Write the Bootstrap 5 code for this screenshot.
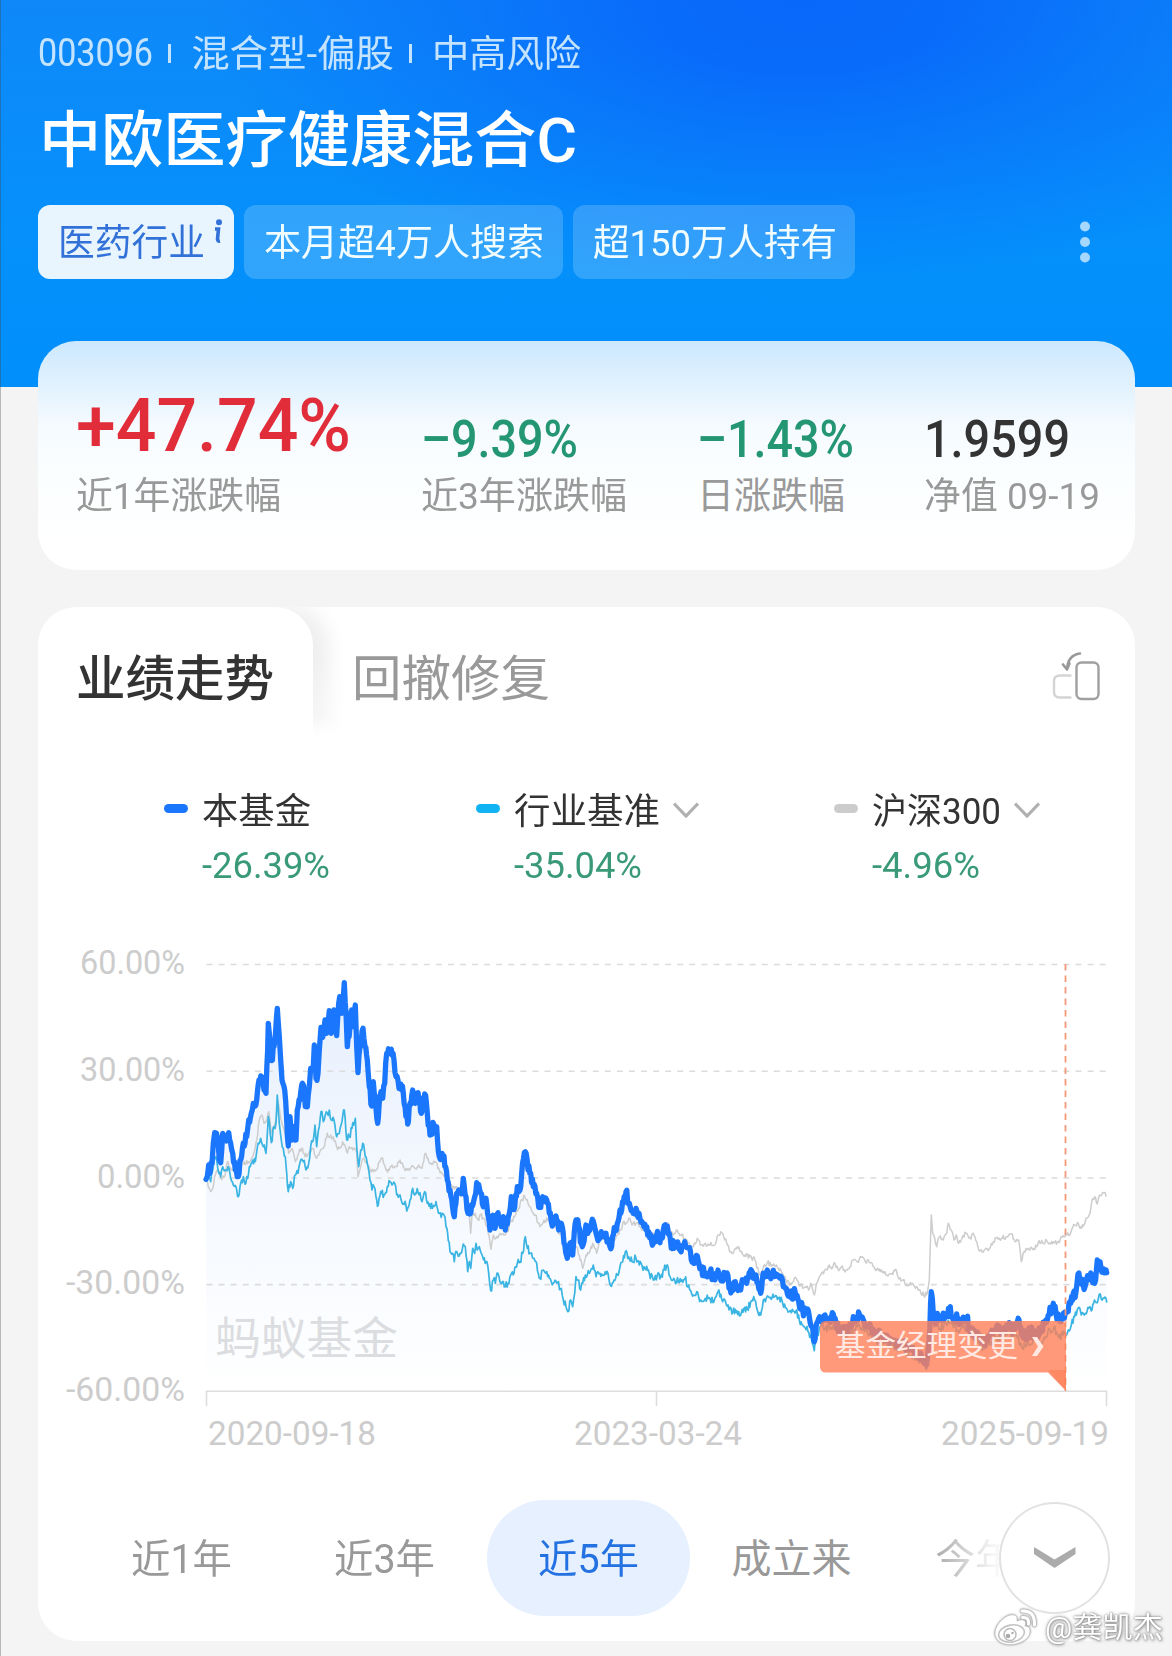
<!DOCTYPE html>
<html lang="zh-CN">
<head>
<meta charset="utf-8">
<meta name="viewport" content="width=device-width, initial-scale=1">
<title>中欧医疗健康混合C</title>
<link href="https://cdn.jsdelivr.net/npm/bootstrap@5.3.0/dist/css/bootstrap.min.css" rel="stylesheet">
<style>
  body { background:#f4f4f4; font-family:Roboto,"Noto Sans CJK SC",sans-serif; color:#333; width:1172px; height:1656px; overflow:hidden; }
  body::before { content:""; position:absolute; left:0; top:0; width:1px; height:1656px; background:rgba(70,70,70,.35); z-index:5; }
  [data-w] { display:inline-block; white-space:nowrap; transform-origin:0 50%; }
  .hero { height:387px; padding:27px 38px 0; color:#fff;
    background:radial-gradient(ellipse 600px 285px at 800px 0, #0868fa 0%, rgba(8,104,250,.92) 22%, rgba(8,108,250,.55) 55%, rgba(3,142,251,0) 100%),
      linear-gradient(180deg,#0f88f9 0%,#0590fb 60%,#018ffb 100%); }
  .meta-line { height:52px; font-size:37px; line-height:52px; color:#c3e3fe; }
  .meta-line .digits { font-size:38px; }
  .meta-line .kind { padding-top:4px; }
  .sep { width:3px; height:19px; background:#c3e3fe; }
  .fund-name { font-size:61px; line-height:80px; font-weight:500; margin:22px 0 0 1px; height:80px; }
  .tag-row { margin-top:24px; gap:10px; }
  .tag { height:74px; border-radius:12px; background:rgba(255,255,255,.18); font-size:37px; line-height:77px; padding-left:20px; color:#f1fcff; }
  .tag-1 { width:196px; background:#e8f4fe; color:#3272d8; }
  .tag-2 { width:319px; } .tag-3 { width:282px; }
  .tag-1 svg { margin:14px 0 0 8px; }
  .more { margin-right:44px; }
  .panel { width:1097px; margin-left:38px; border-radius:38px; }
  .stats { height:229px; margin-top:-46px; position:relative; padding-left:38px; background:linear-gradient(180deg,#cce8fe 0,#e4f3fe 22%,#f6fbff 38%,#fbfeff 60%,#fff 90%); }
  .stat-val { height:88px; margin-top:42px; display:flex; align-items:flex-end; font-weight:500; font-size:51px; line-height:63px; color:#249672; }
  .stat-big { font-size:75px; line-height:91px; font-weight:500; color:#e12c3a; }
  .stat-nav { color:#333; }
  .stat-lab { font-size:37px; line-height:44px; color:#999; margin-top:4px; }
  .trend { height:1034px; margin-top:37px; background:#fff; overflow:hidden; }
  .tabs-line { height:130px; }
  .tab-on { width:275px; height:130px; padding:43px 0 0 38px; font-size:49px; font-weight:500; line-height:60px; position:relative; background:#fff; border-radius:38px 38px 0 0; box-shadow:14px 0 20px 2px rgba(0,0,0,.065); clip-path:inset(0 -50px 0 0); }
  .tab-on::after { content:""; position:absolute; left:100%; width:50px; top:50px; bottom:0; background:linear-gradient(rgba(255,255,255,0),rgba(255,255,255,.4) 60px,#fff); }
  .tab-off { padding:43px 0 0 39px; font-size:49px; line-height:60px; color:#999; position:relative; }
  .rotate { margin:44px 33px 0 auto; }
  .legend-line { padding-top:53px; height:148px; }
  .key { display:grid; grid-template-columns:38px auto; align-content:start; }
  .key-pill { width:24px; height:9px; border-radius:5px; margin-top:14px; }
  .key-name { font-size:36px; line-height:44px; height:44px; }
  .key-val { grid-column:2; font-size:36px; line-height:40px; margin-top:12px; color:#3a9a78; }
  .key-name svg { margin-left:13px; vertical-align:6px; }
  .plot { display:block; margin-top:55px; }
  .ranges { height:116px; margin-top:40px; padding-left:42px; position:relative; }
  .range { flex:0 0 203.3px; text-align:center; font-size:40px; line-height:120px; height:116px; color:#999; }
  .range.on { background:#e6f0ff; border-radius:58px; color:#2472e2; }
  .range.last { flex-basis:180px; text-align:left; padding-left:42px; overflow:hidden; white-space:nowrap; background:linear-gradient(90deg,#aaa 42px,#ddd 80px,#f5f5f5 100px,#fff 118px); -webkit-background-clip:text; color:transparent; }
  .expand { position:absolute; left:961px; top:2px; width:111px; height:112px; border:2.5px solid #e2e2e2; border-radius:50%; background:#fff; }
  .signature { position:absolute; left:993px; top:1606px; z-index:6; color:#fff; font-size:29px; line-height:45px; text-shadow:0 0 2px #777,1px 1px 3px #999,0 0 4px #bbb; }
  .signature svg { filter:drop-shadow(0 0 1px #999); }
</style>
<script src="https://cdn.jsdelivr.net/npm/bootstrap@5.3.0/dist/js/bootstrap.bundle.min.js"></script>
</head>
<body>
<header class="hero">
  <div class="meta-line d-flex align-items-center">
    <span class="digits" data-w="115">003096</span>
    <i class="sep" style="margin-left:15px"></i>
    <span class="kind ms-3 ps-1" data-w="207">混合型-偏股</span>
    <i class="sep" style="margin-left:15px"></i>
    <span class="kind" style="margin-left:20px" data-w="149">中高风险</span>
  </div>
  <h1 class="fund-name"><span data-w="538">中欧医疗健康混合C</span></h1>
  <div class="tag-row d-flex align-items-center">
    <div class="tag tag-1 d-flex"><span data-w="147">医药行业</span>
      <svg width="10" height="26" viewBox="0 0 10 26"><circle cx="6" cy="3.200" r="3" fill="#3272d8"/><path d="M2 10H5.500L4.500 20Q4.500 22.500 7 22" fill="none" stroke="#3272d8" stroke-width="3.600"/></svg>
    </div>
    <div class="tag tag-2"><span data-w="280">本月超4万人搜索</span></div>
    <div class="tag tag-3"><span data-w="244">超150万人持有</span></div>
    <svg class="more ms-auto" width="10" height="42" viewBox="0 0 10 42" fill="#a5d7ff"><circle cx="5" cy="5.5" r="5"/><circle cx="5" cy="21" r="5"/><circle cx="5" cy="36.5" r="5"/></svg>
  </div>
</header>

<section class="panel stats d-flex">
  <div style="width:345px"><div class="stat-val stat-big"><span data-w="275">+47.74%</span></div><div class="stat-lab"><span data-w="205">近1年涨跌幅</span></div></div>
  <div style="width:276px"><div class="stat-val"><span data-w="157">–9.39%</span></div><div class="stat-lab"><span data-w="206">近3年涨跌幅</span></div></div>
  <div style="width:227px"><div class="stat-val"><span data-w="157">–1.43%</span></div><div class="stat-lab"><span data-w="148">日涨跌幅</span></div></div>
  <div><div class="stat-val stat-nav"><span data-w="146">1.9599</span></div><div class="stat-lab"><span data-w="176">净值 09-19</span></div></div>
</section>

<section class="panel trend">
  <div class="tabs-line d-flex">
    <div class="tab-on"><span data-w="198">业绩走势</span></div>
    <div class="tab-off"><span data-w="198">回撤修复</span></div>
    <svg class="rotate" width="50" height="52" viewBox="1052 651 50 52" fill="none" stroke-linecap="round" stroke-linejoin="round">
      <rect x="1076.5" y="662.5" width="22" height="36.5" rx="5" stroke="#a0a0a0" stroke-width="2.4"/>
      <path d="M1070.5 675.5H1060Q1054 675.5 1054 681V692Q1054 697.5 1060 697.5H1070.5" stroke="#d4d4d4" stroke-width="2.4"/>
      <path d="M1080 653.5Q1068 655 1067 669M1063 664.5L1067 669.5L1069.500 663.5" stroke="#999" stroke-width="2.6"/>
    </svg>
  </div>

  <div class="legend-line d-flex">
    <div class="key" style="margin-left:126px;width:312px"><i class="key-pill" style="background:#1a76fc"></i><div class="key-name"><span data-w="109">本基金</span></div><div class="key-val"><span data-w="128">-26.39%</span></div></div>
    <div class="key" style="width:358px"><i class="key-pill" style="background:#12b3f2"></i><div class="key-name"><span data-w="146">行业基准</span><svg width="26" height="16" viewBox="0 0 26 16"><path d="M1 1.5L13 14L25 1.5" fill="none" stroke="#b0b0b0" stroke-width="3.2"/></svg></div><div class="key-val"><span data-w="128">-35.04%</span></div></div>
    <div class="key"><i class="key-pill" style="background:#ccc"></i><div class="key-name"><span data-w="129">沪深300</span><svg width="26" height="16" viewBox="0 0 26 16"><path d="M1 1.5L13 14L25 1.5" fill="none" stroke="#b0b0b0" stroke-width="3.2"/></svg></div><div class="key-val"><span data-w="108">-4.96%</span></div></div>
  </div>

  <svg class="plot" width="1097" height="520" viewBox="38 940 1097 520" font-family="Roboto, 'Noto Sans CJK SC', sans-serif">
    <defs><linearGradient id="area" gradientUnits="userSpaceOnUse" x1="0" y1="980" x2="0" y2="1391"><stop offset="0" stop-color="#e5effd"/><stop offset=".45" stop-color="#f3f7fe"/><stop offset=".8" stop-color="#fafcff"/><stop offset="1" stop-color="#fff"/></linearGradient></defs>
    <path id="fillArea" fill="url(#area)"/>
    <path d="M206.5 964.5H1106M206.5 1071.3H1106M206.5 1178H1106M206.5 1284.6H1106" stroke="#dcdcdc" stroke-width="1.6" stroke-dasharray="6 6.07"/>
    <path d="M206.5 1406V1391.3H1106.5V1406M656.5 1391V1406" fill="none" stroke="#ddd" stroke-width="1.6"/>
    <text x="215" y="1355" font-size="45" fill="#dcdde0" textLength="183" lengthAdjust="spacingAndGlyphs">蚂蚁基金</text>
    <g fill="#ccc" font-size="34">
      <text x="80" y="974" textLength="105" lengthAdjust="spacingAndGlyphs">60.00%</text>
      <text x="80" y="1080.500" textLength="105" lengthAdjust="spacingAndGlyphs">30.00%</text>
      <text x="97" y="1187.500" textLength="88" lengthAdjust="spacingAndGlyphs">0.00%</text>
      <text x="66" y="1294" textLength="119" lengthAdjust="spacingAndGlyphs">-30.00%</text>
      <text x="66" y="1400.500" textLength="119" lengthAdjust="spacingAndGlyphs">-60.00%</text>
      <text x="208" y="1445" textLength="168" lengthAdjust="spacingAndGlyphs">2020-09-18</text>
      <text x="574" y="1445" textLength="168" lengthAdjust="spacingAndGlyphs">2023-03-24</text>
      <text x="941" y="1445" textLength="168" lengthAdjust="spacingAndGlyphs">2025-09-19</text>
    </g>
    <g fill="none" stroke-linejoin="round" stroke-linecap="round">
      <path id="lineIndex" stroke="#cdcdcd" stroke-width="1.5"/>
      <path id="lineSector" stroke="#3ab4e2" stroke-width="1.7"/>
      <path id="lineFund" stroke="#1a76fc" stroke-width="5.3"/>
    </g>
    <path d="M1065.5 964V1391" stroke="#f39878" stroke-width="1.8" stroke-dasharray="6.5 5"/>
    <path d="M826 1321H1060Q1066 1321 1066 1327V1391L1048 1372.5H826Q820 1372.5 820 1366.5V1327Q820 1321 826 1321Z" fill="#ff8058" fill-opacity=".8"/>
    <path d="M1048 1370H1066V1391Z" fill="#f97a50" fill-opacity=".5"/>
    <text x="835" y="1356" font-size="30" fill="#ffe9e2" textLength="183" lengthAdjust="spacingAndGlyphs">基金经理变更</text>
    <path d="M1032 1337H1037L1043.500 1346.5L1037 1356H1032L1038 1346.5Z" fill="#ffe9e2"/>
  </svg>

  <div class="ranges d-flex">
    <div class="range"><span data-w="101">近1年</span></div>
    <div class="range"><span data-w="101">近3年</span></div>
    <div class="range on"><span data-w="101">近5年</span></div>
    <div class="range"><span data-w="120">成立来</span></div>
    <div class="range last">今年来</div>
    <div class="expand"><svg class="d-block" width="106" height="107" viewBox="0 0 106 107"><path d="M33 43L53.500 55.500L74.500 43V50L53.500 64L33 50Z" fill="#ababab"/></svg></div>
  </div>
</section>

<div class="signature d-flex">
  <svg class="me-2" width="44" height="42" viewBox="0 0 44 42">
    <path d="M17 9C9 11 1 21 2 29C4 38 15 40 23 38C32 36 38 30 37 24C37 21 34 20 32 20C34 15 31 12 24 15C25 10 22 8 17 9Z" fill="#fff" stroke="#bbb" stroke-width=".8"/>
    <ellipse cx="18.500" cy="27.500" rx="13" ry="8.500" fill="none" stroke="#c4c4c4" stroke-width="1.6" transform="rotate(-10 18.500 27.500)"/>
    <circle cx="17" cy="28.500" r="6" fill="#fff" stroke="#bbb" stroke-width="1.5"/><circle cx="15" cy="30" r="2.300" fill="#aaa"/><circle cx="19.500" cy="27" r="1.200" fill="#aaa"/>
    <path d="M29 5Q42 4 41.500 19M29.500 11.500Q36.500 11 35.500 18" fill="none" stroke="#bbb" stroke-width="4.300" stroke-linecap="round"/>
    <path d="M29 5Q42 4 41.500 19M29.500 11.500Q36.500 11 35.500 18" fill="none" stroke="#fff" stroke-width="3" stroke-linecap="round"/>
  </svg>
  <span data-w="118">@龚凯杰</span>
</div>

<script>
  // Condense each label to its design width.
  document.querySelectorAll('[data-w]').forEach(function (el) {
    var natural = el.getBoundingClientRect().width, want = +el.dataset.w;
    el.style.transform = 'scaleX(' + want / natural + ')';
    el.style.marginRight = (want - natural) + 'px';
  });

  // Series are held in thirds of a pixel, in three consecutive windows.
  var OFFSETS = [[0, 0], [750, 540], [1530, 720]];
  var fund = [
    '48,718 52,710 56,675 60,700 66,670 70,610 74,578 82,590 88,660 92,668 98,580 106,600 116,578 122,610 128,640 136,690 145,710 152,660 160,610 170,590 176,540 184,520 190,490 200,480 207,420 215,410 222,450 228,460 235,250 240,300 245,362 252,320 256,290 262,205 268,290 272,360 276,420 284,450 290,540 295,618 300,530 305,600 310,560 318,600 322,510 330,480 335,435 342,440 346,500 352,500 358,440 362,385 370,380 373,315 378,415 384,400 388,330 393,262 398,292 405,240 410,280 418,212 424,280 432,210 440,287 446,190 449,170 455,220 463,128 468,220 472,320 480,260 485,210 490,260 496,195 500,320 504,398 510,320 519,265 525,320 532,360 538,440 545,498 550,425 556,470 563,550 570,470 578,475 584,430 590,340 604,328 612,360 618,410 630,440 640,460 653,552 660,490 668,450 676,490 684,458 694,520 704,462 712,520 720,585 732,555 740,560 748,650 762,648 772,720 780,750 793,830 800,760 812,760 820,715 828,770 834,820 840,822 850,790 860,728 872,760 880,800 888,775 895,830',
    '150,330 156,290 165,325 174,278 184,320 190,290 196,330 205,290 214,230 224,262 232,200 240,210 245,160 256,95 264,150 272,160 280,200 290,220 296,262 308,230 320,240 328,280 340,310 348,288 356,330 364,310 372,370 382,415 390,370 398,405 408,300 416,320 424,370 430,372 438,315 446,330 457,298 466,330 474,362 484,335 498,340 510,380 520,345 532,310 540,270 550,250 558,215 568,250 580,280 588,265 600,295 612,320 626,335 640,370 650,345 660,368 670,330 682,318 694,385 708,368 718,388 734,365 746,385 754,420 764,430 772,408 782,445 796,465 810,455 822,475 834,450 846,475 858,460 870,500 878,512 886,485 896,500',
    '122,330 132,300 140,310 150,280 160,295 168,285 174,310 182,340 190,280 202,270 215,290 225,280 240,295 250,320 262,340 272,352 286,338 296,365 308,390 318,395 328,410 336,440 343,485 350,430 362,415 375,405 388,415 400,402 408,430 418,450 430,440 442,460 452,445 460,410 468,415 478,402 490,420 502,440 512,440 525,465 540,455 555,480 570,475 590,500 610,490 630,510 650,515 665,535 682,540 687,480 694,335 700,400 705,430 712,400 720,420 735,405 748,388 760,420 775,415 785,425 800,412 808,450 822,450 835,470 850,490 865,475 880,460 892,435 905,450 920,435 935,450 950,440 957,420 964,460 975,470 990,455 1005,460 1020,460 1035,430 1045,405 1060,370 1068,400 1080,425 1090,400 1102,395 1112,370 1120,340 1128,335 1134,282 1142,310 1155,320 1165,295 1175,290 1184,310 1192,240 1200,245 1208,275 1218,270 1220,278'];
  var sector = [
    '50,718 62,725 70,680 78,650 84,690 92,710 98,680 106,690 114,680 122,715 130,735 138,740 145,770 152,730 160,710 168,728 178,680 188,660 196,665 204,610 212,595 220,620 228,640 235,530 244,608 252,560 258,550 262,465 268,550 274,600 280,625 286,650 290,700 295,755 302,725 308,745 316,705 324,700 332,660 340,665 348,690 356,670 362,620 370,600 375,555 380,620 388,560 393,515 400,545 406,525 412,520 418,510 424,540 432,540 440,590 448,580 456,545 463,510 470,600 478,590 486,565 496,535 500,620 506,680 512,630 518,610 526,650 534,680 540,720 546,750 552,740 560,780 565,795 572,755 582,765 592,740 600,725 606,735 614,730 620,765 630,765 640,790 653,805 660,780 668,745 674,765 684,755 696,785 704,755 712,790 722,805 738,785 748,820 762,825 768,860',
    '25,362 30,395 38,400 43,425 50,395 60,400 70,372 76,380 83,455 88,425 92,445 98,385 104,400 108,370 112,390 118,380 128,410 138,425 146,460 152,512 160,480 166,490 174,460 182,490 190,485 196,500 204,490 212,465 222,460 232,430 240,425 248,400 256,350 262,385 272,400 280,415 290,430 300,475 310,450 318,460 328,475 340,490 350,490 364,505 370,540 378,560 384,575 392,540 398,560 404,520 408,470 416,480 422,510 428,490 436,465 448,460 460,435 468,470 480,460 496,455 504,460 512,498 522,480 532,465 540,440 548,425 556,395 566,410 576,425 588,415 598,435 612,440 628,460 640,480 652,465 662,470 672,450 682,435 692,475 704,480 718,488 734,478 746,495 758,528 770,515 782,540 796,535 810,535 822,545 834,515 848,545 864,555 876,582 886,568 896,575',
    '124,400 134,382 142,388 152,365 164,360 172,390 182,405 190,360 202,348 214,358 224,350 238,352 248,370 262,390 274,398 288,392 298,420 312,440 324,455 334,470 343,512 350,470 360,440 375,445 400,435 418,460 440,465 455,455 475,435 500,450 520,480 545,490 575,495 610,510 650,535 682,560 688,500 694,400 700,430 720,445 750,430 780,450 800,440 825,480 850,505 880,480 920,465 950,465 965,500 1000,480 1030,480 1050,450 1062,440 1075,470 1090,465 1102,460 1114,435 1124,410 1134,385 1144,405 1156,400 1166,385 1176,390 1186,365 1192,368 1198,342 1204,358 1212,355 1220,366'];
  var index300 = [
    '50,725 60,750 68,745 76,705 84,690 92,715 104,710 112,665 122,690 134,695 146,700 160,670 175,665 190,645 200,600 208,540 216,525 222,550 230,545 236,515 244,580 252,560 258,540 263,480 270,520 280,560 288,600 296,640 306,625 316,665 326,640 335,625 345,650 356,640 368,625 380,655 392,630 404,615 412,580 420,590 430,590 440,620 448,625 458,605 470,635 480,625 494,628 500,640 504,710 512,680 520,655 530,665 540,690 550,695 560,688 568,665 578,655 588,690 598,690 606,675 618,680 630,660 640,680 652,690 664,680 676,685 686,675 696,685 706,640 716,665 726,670 736,665 746,685 756,700 766,705 776,720 788,745 800,740 812,770 825,760 836,800 842,880 846,825 856,820 864,840 872,825 882,835 892,860',
    '148,350 153,388 160,345 168,355 180,340 192,345 202,335 212,305 224,290 236,265 246,240 254,230 264,250 274,270 286,285 300,320 312,300 326,300 340,305 352,330 364,340 374,380 384,410 396,370 408,380 418,405 428,445 438,405 448,400 458,370 470,400 480,360 496,350 510,380 520,360 532,345 542,330 550,305 558,310 566,295 576,315 588,310 600,320 614,330 628,345 642,340 656,350 670,340 684,308 692,335 700,345 712,330 722,345 736,355 750,378 760,380 772,355 784,375 796,370 810,375 824,375 834,345 848,340 860,370 876,400 886,385 896,380',
    '122,215 135,225 150,230 165,240 176,275 182,285 190,262 202,248 216,255 232,262 246,280 258,300 272,310 286,292 300,318 316,320 326,330 332,310 343,345 350,310 362,285 376,270 388,255 398,262 405,250 414,268 424,262 438,270 450,260 460,240 472,245 484,232 496,245 508,248 522,260 536,272 552,280 564,288 576,280 586,268 594,290 606,300 620,312 634,312 646,325 660,330 672,348 682,338 688,300 694,105 698,160 704,175 710,200 718,172 730,180 740,160 745,130 754,150 762,180 768,165 776,190 786,175 798,160 810,172 822,165 830,185 836,210 846,215 858,205 868,205 880,185 892,172 904,175 918,170 935,162 942,178 956,180 964,245 972,215 986,208 1002,205 1018,182 1028,188 1040,182 1052,192 1064,188 1078,188 1086,172 1100,165 1112,158 1124,135 1132,128 1140,145 1150,138 1160,115 1170,100 1176,60 1184,50 1192,72 1200,45 1206,42 1212,38 1218,48'];
  var seed = 7;
  function rand() { seed = (seed * 16807) % 2147483647; return seed / 2147483647 - 0.5; }
  function build(parts, noise) {
    var pts = [];
    parts.forEach(function (s, i) {
      s.split(' ').forEach(function (p) {
        var c = p.split(',');
        pts.push([190 + (+c[0] + OFFSETS[i][0]) / 3, 940 + (+c[1] + OFFSETS[i][1]) / 3]);
      });
    });
    var d = 'M' + pts[0];
    for (var k = 1; k < pts.length; k++) {
      var a = pts[k - 1], b = pts[k], n = Math.max(1, Math.round((b[0] - a[0]) / 0.9));
      for (var j = 1; j <= n; j++) {
        var t = j / n;
        d += 'L' + (a[0] + (b[0] - a[0]) * t).toFixed(1) + ' ' + (a[1] + (b[1] - a[1]) * t + (j < n ? rand() * noise : 0)).toFixed(1);
      }
    }
    return d;
  }
  var fundPath = build(fund, 11);
  document.getElementById('lineFund').setAttribute('d', fundPath);
  document.getElementById('fillArea').setAttribute('d', fundPath + 'V1391H206.5Z');
  document.getElementById('lineSector').setAttribute('d', build(sector, 8));
  document.getElementById('lineIndex').setAttribute('d', build(index300, 5));
</script>
</body>
</html>
